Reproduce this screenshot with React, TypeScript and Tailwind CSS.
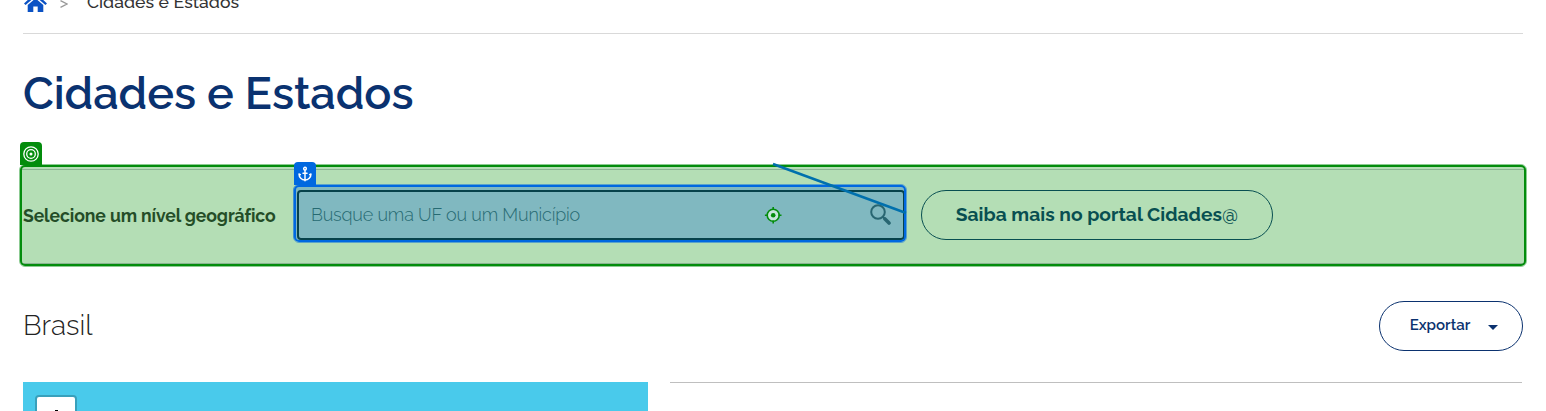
import { Anchor } from "lucide-react";

function Breadcrumb() {
  return (
    <nav className="flex h-[34px] items-start border-b border-[#d9d9d9]">
      <svg className="-mt-[7px] ml-px h-[19px] w-[23px] shrink-0" viewBox="0 0 23 19" fill="#0b52c4">
        <path d="M11.5 0 0 10.4l1.6 1.7 9.9-8.7 9.9 8.7 1.6-1.7-4.3-3.9V1h-3v2.8z" />
        <path d="M3.7 12.1 11.5 5.3l7.8 6.8V19h-5.6v-5.5H9.3V19H3.7z" />
      </svg>
      <svg className="mt-0 ml-[13px] h-[8px] w-[8px] shrink-0" viewBox="0 0 8 8" fill="none" stroke="#999" strokeWidth="1.3">
        <path d="M.5.7 7 4 .5 7.3" />
      </svg>
      <span className="-mt-[9px] ml-[19px] text-[17.6px] leading-[22px] font-medium tracking-[0.03px] whitespace-nowrap text-[#333]">
        Cidades e Estados
      </span>
    </nav>
  );
}

function Target() {
  return (
    <svg className="size-4" viewBox="0 0 16 16" fill="none" stroke="white" strokeWidth="1.3">
      <circle cx="8" cy="8" r="7.2" />
      <circle cx="8" cy="8" r="4.3" />
      <circle cx="8" cy="8" r="1.5" fill="white" stroke="none" />
    </svg>
  );
}

function SearchBox() {
  return (
    <div className="relative ml-[22px] flex h-[50px] w-[608px] shrink-0 items-center rounded-[4px] border-2 border-[#07424b] px-3">
      <span className="-mt-px text-[18px] leading-6 font-light tracking-[-0.19px] whitespace-nowrap text-[#266a72]">
        Busque uma UF ou um Município
      </span>
      <svg className="-mt-[2px] ml-auto size-[21px]" viewBox="0 0 21 21" fill="none" stroke="#286671">
        <circle cx="8" cy="8" r="6.8" strokeWidth="2" />
        <path d="m13 13 1.5 1.5" strokeWidth="2" />
        <path d="m15 15 4 4" strokeWidth="3.6" strokeLinecap="round" />
      </svg>
    </div>
  );
}

function Overlays() {
  return (
    <>
      <div className="absolute top-[164px] left-[19px] h-[103px] w-[1508px] rounded-[6px] border border-[#008c0e]/45" />
      <div className="absolute top-[165px] left-[20px] h-[101px] w-[1506px] rounded-[5px] border-2 border-[#038c0c]" />
      <div className="absolute top-[142px] left-[20px] flex h-[23px] w-[22px] items-center justify-center rounded-t-[4px] bg-[#038c0c]">
        <Target />
      </div>
      <div className="absolute top-[184px] left-[293px] h-[59px] w-[614px] rounded-[6px] border border-[#0068e0]/50" />
      <div className="absolute top-[185px] left-[294px] h-[57px] w-[612px] rounded-[5px] border-2 border-[#0068e0]" />
      <div className="absolute top-[162px] left-[294px] flex h-[23px] w-[22px] items-center justify-center rounded-t-[4px] bg-[#0068e0]">
        <Anchor className="h-[18px] w-4 text-white" strokeWidth={2.2} />
      </div>
      <svg className="absolute top-[160px] left-[760px] h-[70px] w-[150px]" viewBox="760 160 150 70" fill="none">
        <path d="M773 164 906 213" stroke="#0070ad" strokeWidth="2.5" />
        <circle cx="773.2" cy="215.3" r="6" fill="#c6e5dc" stroke="#038c0c" strokeWidth="1.6" />
        <circle cx="773.2" cy="215.3" r="2.3" fill="#038c0c" />
        <path d="M773.2 207v3M773.2 220.6v3M764.9 215.3h3M778.5 215.3h3" stroke="#038c0c" strokeWidth="1.6" />
      </svg>
    </>
  );
}

export default function App() {
  return (
    <div className="relative h-[411px] w-[1546px] overflow-hidden bg-white font-['Raleway','Lato',sans-serif]">
      <div className="mx-[23px] flex flex-col">
        <Breadcrumb />
        <h1 className="h-[131px] pt-[33px] text-[45px] leading-[54px] font-semibold tracking-[-0.04px] whitespace-nowrap text-[#0a3270]">
          Cidades e Estados
        </h1>
        <section className="-mx-[3px] h-[101px] rounded-[5px] bg-[#b4deb5] px-[3px] pt-1 pb-[2px]">
          <div className="-mx-px flex h-[95px] items-center border-y border-[#8ab492] px-px pb-[3px]">
            <span className="w-[252px] shrink-0 pt-[2px] text-[17.6px] leading-6 font-bold tracking-[-0.1px] whitespace-nowrap text-[#244d27]">
              Selecione um nível geográfico
            </span>
            <div className="relative">
              <div className="absolute top-[-5px] left-[18px] h-[56px] w-[612px] rounded-[5px] bg-[#80b8c0]" />
              <SearchBox />
            </div>
            <button className="ml-4 h-[50px] w-[352px] shrink-0 rounded-full border border-[#084f51] pb-px text-[19.2px] font-bold tracking-[0.02px] whitespace-nowrap text-[#084f51]">
              Saiba mais no portal Cidades<span className="font-medium">@</span>
            </button>
          </div>
        </section>
        <div className="mt-[35px] flex h-[50px] items-center justify-between">
          <h2 className="text-[28px] leading-[34px] font-light text-[#222]">Brasil</h2>
          <button className="flex h-[50px] w-[144px] items-center rounded-full border border-[#0b326f] pl-[29.5px] text-[15px] font-semibold text-[#0b326f]">
            <span className="w-[61px] pb-[2px] whitespace-nowrap">Exportar</span>
            <svg className="mt-[2px] ml-[17.5px] h-[5px] w-[10px]" viewBox="0 0 10 5" fill="currentColor">
              <path d="M0 0h10L5 5z" />
            </svg>
          </button>
        </div>
        <div className="mt-[31px] flex h-[29px] gap-[22px]">
          <div className="w-[625px] overflow-hidden bg-[#49caeb] pt-[13px] pl-3">
            <div className="flex h-[34px] w-[42px] justify-center rounded-[4px] border-2 border-[#38a0bb] bg-white pt-[13px]">
              <span className="h-4 w-[3px] bg-black" />
            </div>
          </div>
          <div className="mr-px flex-1 border-t border-[#bfbfbf]" />
        </div>
      </div>
      <Overlays />
    </div>
  );
}
